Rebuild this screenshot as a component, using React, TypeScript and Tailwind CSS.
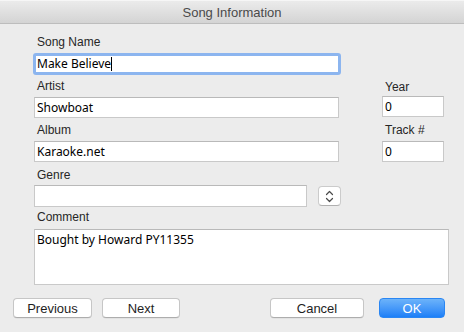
import React from "react";

const labelCls = "block h-[14px] leading-[14px] text-[12px] pl-[3px] text-[#262626]";
const fieldFont = { fontFamily: '"Noto Sans", "DejaVu Sans", sans-serif' };

function Field({ value, className = "", focused = false, cursor = false }: { value: string; className?: string; focused?: boolean; cursor?: boolean }) {
  return (
    <div
      className={
        "flex items-center bg-white text-[12px] text-black overflow-hidden " +
        (focused
          ? "border-[3px] border-[#8cb5ef] rounded-[3px] pl-[1px] "
          : "border border-[#c9c9c9] border-t-[#b9b9b9] pl-[2px] ") +
        className
      }
      style={fieldFont}
    >
      <span className="whitespace-pre leading-[16px]">{value}</span>
      {cursor && <span className="inline-block w-px h-[14px] bg-black" />}
    </div>
  );
}

function Btn({ label, className = "", primary = false }: { label: string; className?: string; primary?: boolean }) {
  return (
    <div
      className={
        "h-[20px] flex items-center justify-center rounded-[4px] text-[13px] leading-none " +
        (primary
          ? "bg-gradient-to-b from-[#6cb3fa] to-[#1b7ff7] text-white border border-[#2a86f3] "
          : "bg-white text-[#1e1e1e] border border-[#c6c6c6] border-b-[#adadad] shadow-[0_0.5px_0.5px_rgba(0,0,0,0.08)] ") +
        className
      }
    >
      {label}
    </div>
  );
}

export default function App() {
  return (
    <div
      className="w-[464px] h-[332px] bg-[#ececec] overflow-hidden flex flex-col"
      style={{ fontFamily: '"Liberation Sans", Arial, sans-serif' }}
    >
      {/* Title bar */}
      <div className="h-[24px] shrink-0 bg-gradient-to-b from-[#ebebeb] to-[#d4d4d4] border-b border-[#bdbdbd] border-t border-t-[#f6f6f6] flex items-center justify-center">
        <span className="text-[13px] text-[#4a4a4a] leading-none">Song Information</span>
      </div>

      <div className="flex flex-col pl-[34px]">
        {/* Song name */}
        <div className="mt-[11px]">
          <span className={labelCls}>Song Name</span>
        </div>
        <Field value="Make Believe" focused cursor className="mt-[4px] -ml-[1px] w-[308px] h-[22px]" />

        {/* Artist / Year */}
        <div className="flex mt-[4px]">
          <div className="w-[306px] flex flex-col">
            <span className={labelCls}>Artist</span>
            <Field value="Showboat" className="mt-[4px] w-[305px] h-[21px]" />
          </div>
          <div className="ml-[42px] w-[62px] flex flex-col">
            <span className={labelCls + " pt-[1px]"}>Year</span>
            <Field value="0" className="mt-[3px] w-[62px] h-[21px]" />
          </div>
        </div>

        {/* Album / Track */}
        <div className="flex mt-[5px]">
          <div className="w-[306px] flex flex-col">
            <span className={labelCls}>Album</span>
            <Field value="Karaoke.net" className="mt-[4px] w-[305px] h-[21px]" />
          </div>
          <div className="ml-[42px] w-[62px] flex flex-col">
            <span className={labelCls}>Track #</span>
            <Field value="0" className="mt-[4px] w-[62px] h-[21px]" />
          </div>
        </div>

        {/* Genre */}
        <div className="mt-[6px]">
          <span className={labelCls}>Genre</span>
        </div>
        <div className="flex items-center mt-[3px]">
          <Field value="" className="w-[273px] h-[22px]" />
          <div className="ml-[11px] w-[23px] h-[20px] bg-white rounded-[4px] border border-[#cbcbcb] border-b-[#b0b0b0] flex items-center justify-center">
            <svg width="9" height="13" viewBox="0 0 9 13" fill="none" stroke="#4a4a4a" strokeWidth="1.2" strokeLinecap="round" strokeLinejoin="round">
              <path d="M1.5 4.5 L4.5 1.5 L7.5 4.5" />
              <path d="M1.5 8.5 L4.5 11.5 L7.5 8.5" />
            </svg>
          </div>
        </div>

        {/* Comment */}
        <div className="mt-[3px]">
          <span className={labelCls}>Comment</span>
        </div>
        <div
          className="mt-[5px] w-[415px] h-[56px] bg-white border border-[#c9c9c9] border-t-[#b9b9b9] pl-[2px] pt-[2px] text-[12px] text-black leading-[16px]"
          style={fieldFont}
        >
          Bought by Howard PY11355
        </div>
      </div>

      {/* Buttons */}
      <div className="flex mt-[13px] pl-[13px]">
        <Btn label="Previous" className="w-[79px]" />
        <Btn label="Next" className="ml-[10px] w-[78px]" />
        <Btn label="Cancel" className="ml-[90px] w-[94px]" />
        <Btn label="OK" primary className="ml-[15px] w-[66px]" />
      </div>
    </div>
  );
}
